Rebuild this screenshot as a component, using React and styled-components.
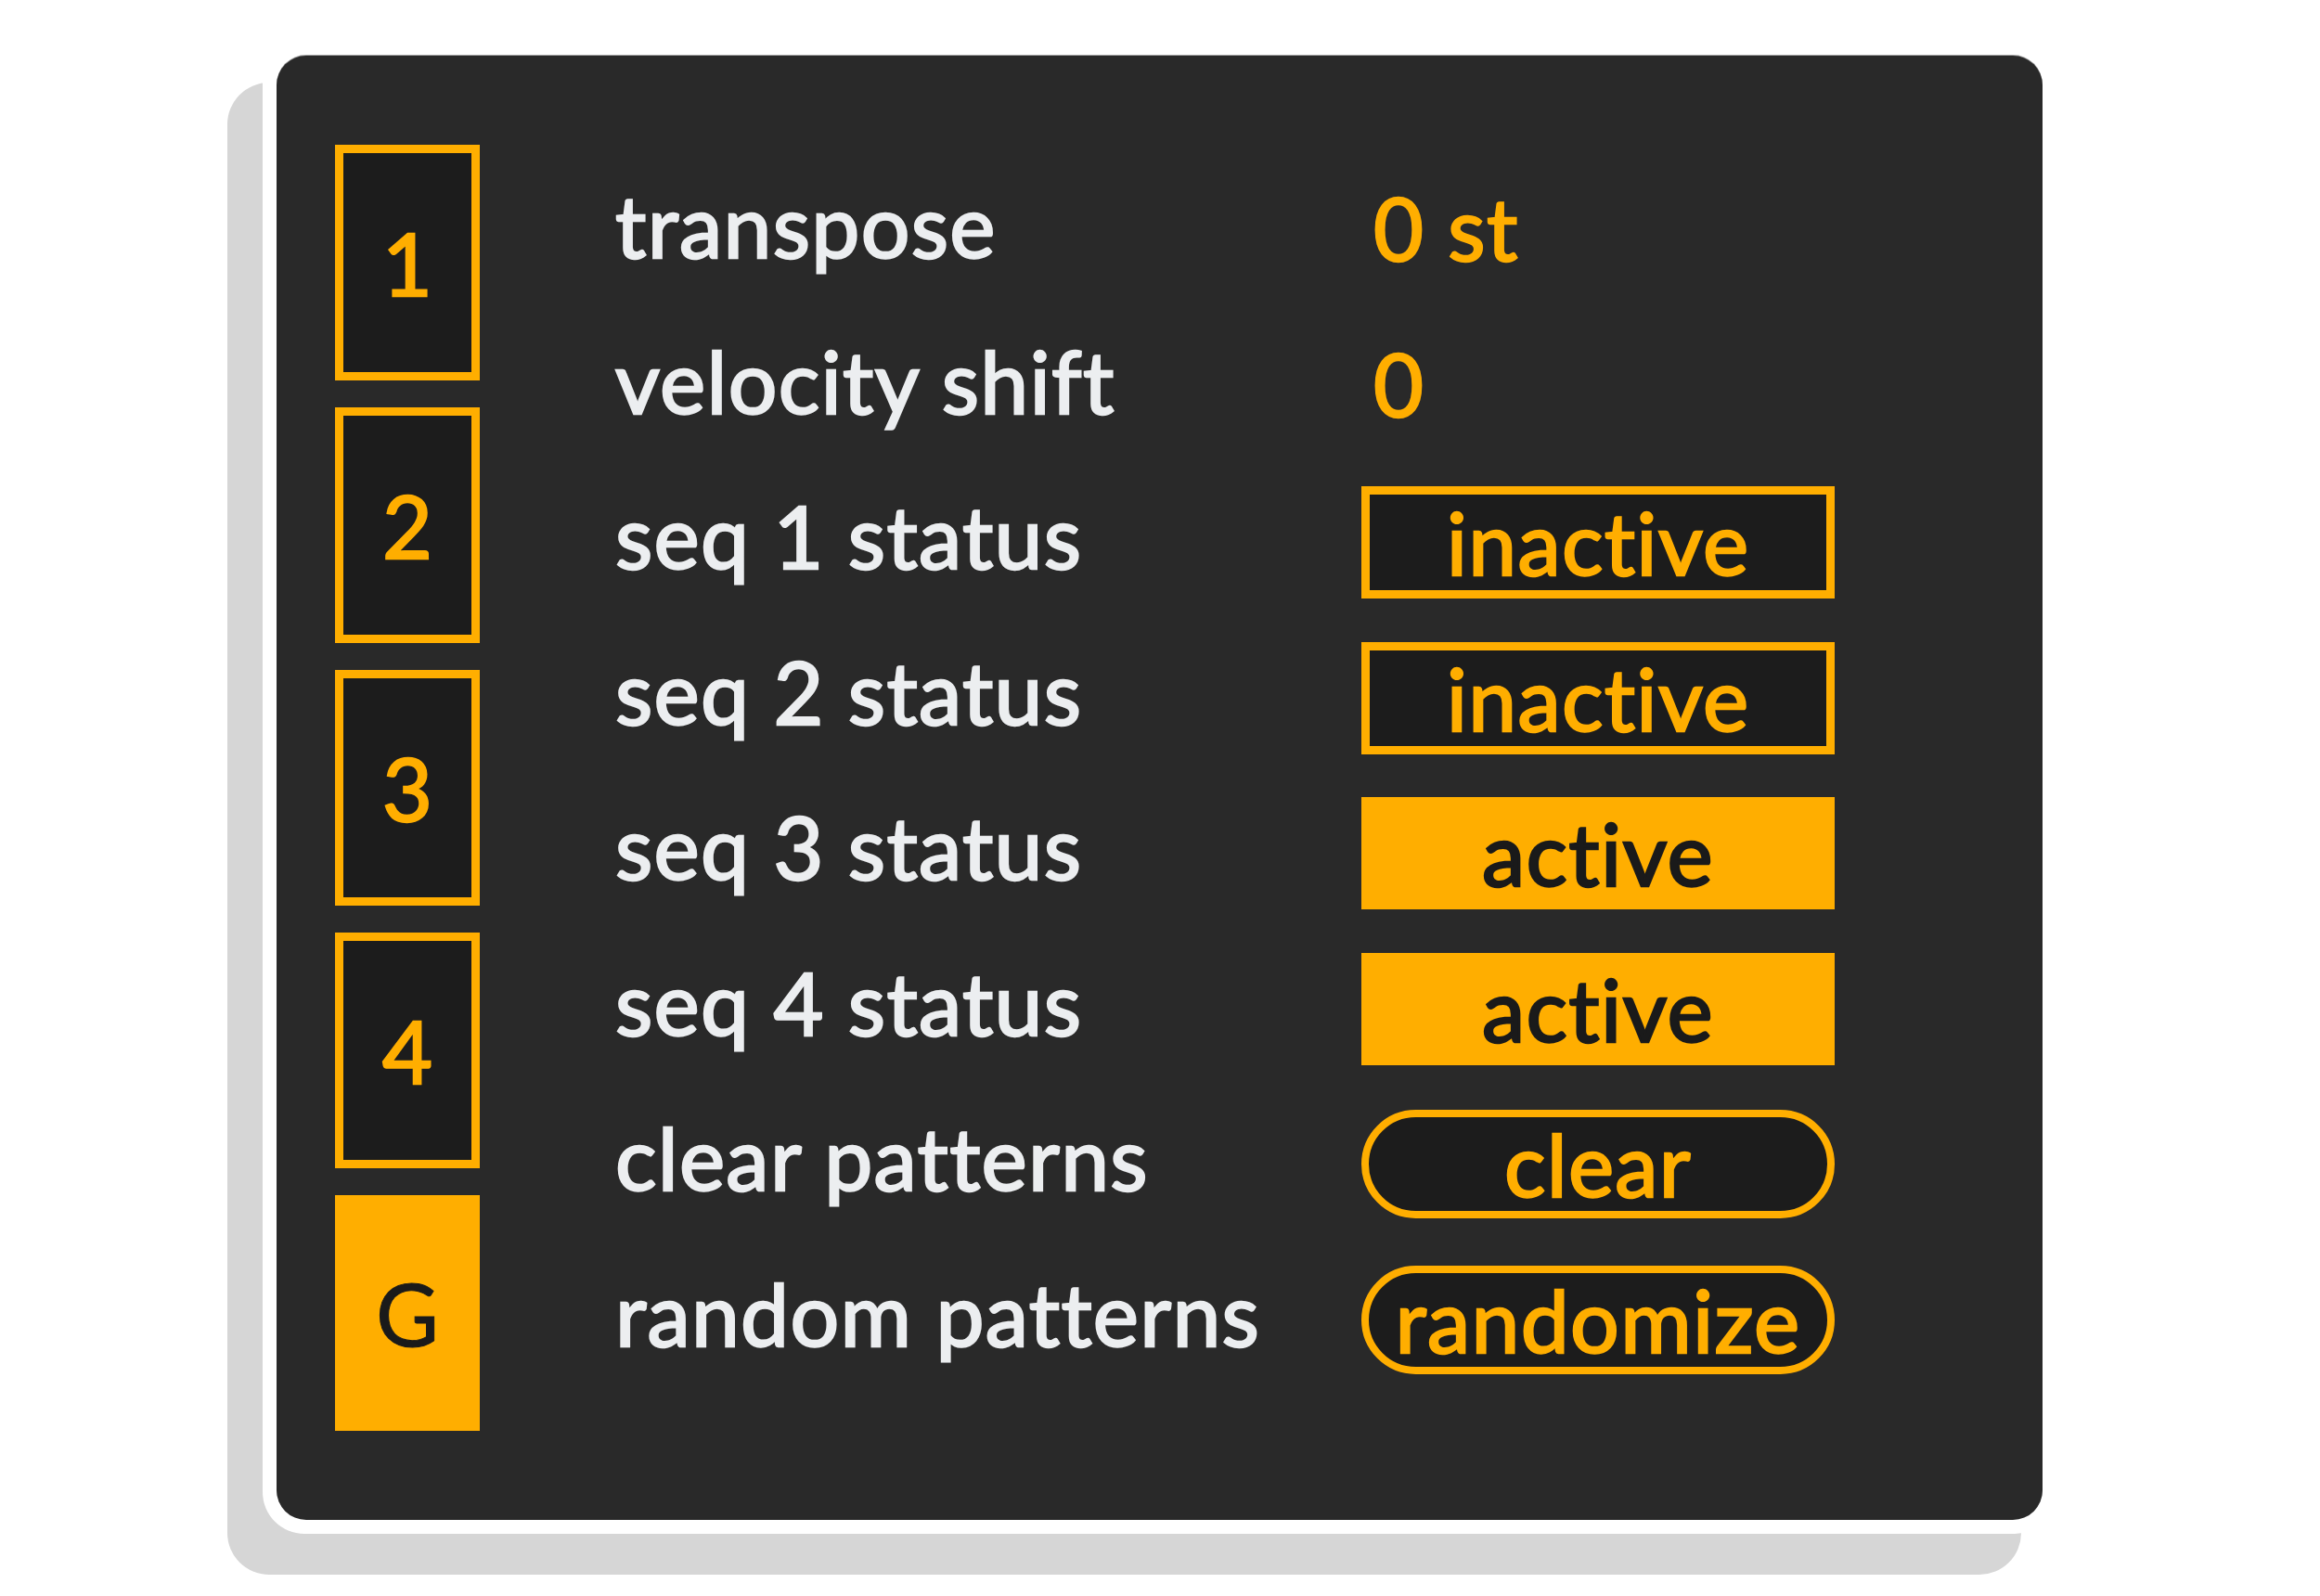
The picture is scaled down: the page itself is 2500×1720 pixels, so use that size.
import React from 'react';
import styled, { createGlobalStyle } from 'styled-components';

const GlobalStyle = createGlobalStyle`
    html, body {
        margin: 0;
        padding: 0;
        background: #ffffff;
    }
    * {
        box-sizing: border-box;
    }
`

const ORANGE = '#ffae00';

const Page = styled.div`
    min-height: 1720px;
    padding: 45px 0 80px 283px;
    font-family: Lato, "Open Sans", sans-serif;
    font-variant-ligatures: none;
    font-feature-settings: "liga" 0, "clig" 0;
    letter-spacing: 1.3px;
    -webkit-text-stroke: 2.4px currentColor;
`

const Frame = styled.div`
    display: inline-block;
    padding: 15px;
    background: #ffffff;
    border-radius: 45px;
    box-shadow: -38px 44px 0 0 #d6d6d6;
`

const Panel = styled.div`
    display: flex;
    width: 1903px;
    height: 1578px;
    padding: 96px 0 0 63px;
    background: #292929;
    border-radius: 32px;
    box-shadow: 0 -1px 0 #a3a3a3;
`

const Tabs = styled.div`
    display: flex;
    flex-direction: column;
    gap: 29px;
`

const Tab = styled.div`
    width: 156px;
    height: 254px;
    display: flex;
    align-items: center;
    justify-content: center;
    font-size: 93px;
    line-height: 1;
    letter-spacing: 0;
    border: 9px solid ${ORANGE};
    background: ${(p) => (p.$on ? ORANGE : '#1c1c1c')};
    color: ${(p) => (p.$on ? '#1a1a1a' : ORANGE)};
    -webkit-text-stroke: ${(p) => (p.$on ? '1px' : '2.4px')} currentColor;
`

const Params = styled.div`
    display: flex;
    flex-direction: column;
    margin: 10px 0 0 146px;
`

const Row = styled.div`
    display: grid;
    grid-template-columns: 804px 510px;
    align-items: center;
    height: 167.5px;
`

const Label = styled.div`
    font-size: 93px;
    line-height: 1;
    color: #eceef0;
    white-space: nowrap;
    padding-bottom: 14px;
`

const Value = styled.div`
    font-size: 93px;
    line-height: 1;
    color: ${ORANGE};
    padding: 0 0 8px 13px;
`

const Toggle = styled.div`
    height: ${(p) => (p.$pill ? '117px' : '121px')};
    display: flex;
    align-items: center;
    justify-content: center;
    font-size: 93px;
    line-height: 1;
    white-space: nowrap;
    border: ${(p) => (p.$pill ? '8px' : '9px')} solid ${ORANGE};
    border-radius: ${(p) => (p.$pill ? '999px' : '0')};
    background: ${(p) => (p.$on ? ORANGE : '#1c1c1c')};
    color: ${(p) => (p.$on ? '#1a1a1a' : ORANGE)};
`

const tabs = ['1', '2', '3', '4', 'G'];

const App = () => {
    return (
        <Page>
            <GlobalStyle />
            <Frame>
                <Panel>
                    <Tabs>
                        {tabs.map((t) => (
                            <Tab key={t} $on={t === 'G'}>{t}</Tab>
                        ))}
                    </Tabs>
                    <Params>
                        <Row>
                            <Label>transpose</Label>
                            <Value>0 st</Value>
                        </Row>
                        <Row>
                            <Label>velocity shift</Label>
                            <Value>0</Value>
                        </Row>
                        <Row>
                            <Label>seq 1 status</Label>
                            <Toggle>inactive</Toggle>
                        </Row>
                        <Row>
                            <Label>seq 2 status</Label>
                            <Toggle>inactive</Toggle>
                        </Row>
                        <Row>
                            <Label>seq 3 status</Label>
                            <Toggle $on>active</Toggle>
                        </Row>
                        <Row>
                            <Label>seq 4 status</Label>
                            <Toggle $on>active</Toggle>
                        </Row>
                        <Row>
                            <Label>clear patterns</Label>
                            <Toggle $pill>clear</Toggle>
                        </Row>
                        <Row>
                            <Label>random patterns</Label>
                            <Toggle $pill>randomize</Toggle>
                        </Row>
                    </Params>
                </Panel>
            </Frame>
        </Page>
    );
}

export default App;
